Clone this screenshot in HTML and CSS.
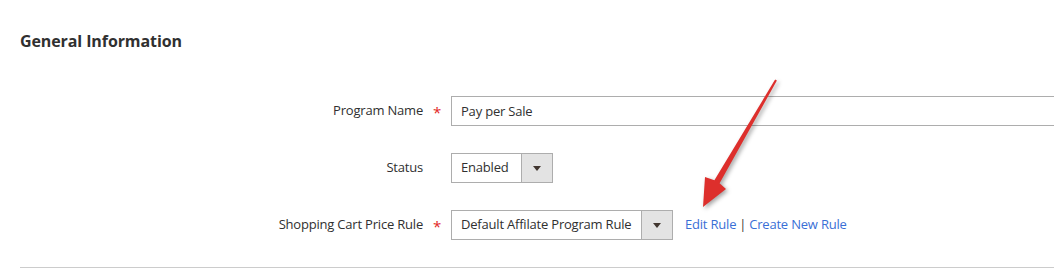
FILE: index.html
```html
<!DOCTYPE html>
<html>
<head>
<meta charset="utf-8">
<link rel="stylesheet" href="styles.css">
</head>
<body>
<div class="page">
  <h2 class="legend">General Information</h2>
  <div class="fields">
    <div class="field">
      <label class="label">Program Name</label>
      <span class="req">*</span>
      <div class="control"><input class="input wide" type="text" value="Pay per Sale"></div>
    </div>
    <div class="field">
      <label class="label">Status</label>
      <span class="req"></span>
      <div class="control">
        <div class="select status"><span class="select-text">Enabled</span><span class="select-btn"><span class="caret"></span></span></div>
      </div>
    </div>
    <div class="field">
      <label class="label">Shopping Cart Price Rule</label>
      <span class="req">*</span>
      <div class="control">
        <div class="select rule"><span class="select-text">Default Affilate Program Rule</span><span class="select-btn"><span class="caret"></span></span></div>
        <div class="links"><a href="#">Edit Rule</a><span class="sep">|</span><a href="#">Create New Rule</a></div>
      </div>
    </div>
  </div>
  <div class="divider"></div>
  <svg class="arrow" width="1054" height="269" viewBox="0 0 1054 269">
    <polygon points="776.9,80.5 719.6,183.3 726,189 703,207 705,177 714.4,180.3 775.1,79.5" fill="#dd2f2c"/>
  </svg>
</div>
</body>
</html>
```
FILE: styles.css
```css
html, body { margin: 0; padding: 0; background: #fff; overflow: hidden; }
body { font-family: "Open Sans", sans-serif; color: #303030; width: 1054px; height: 269px; }
.page { position: relative; padding: 30px 0 0 20px; height: 239px; }
.legend { margin: 0; font-size: 16px; font-weight: 700; line-height: 22px; color: #303030; letter-spacing: -0.1px; }
.fields { margin-top: 44px; display: flex; flex-direction: column; gap: 27px; }
.field { display: grid; grid-template-columns: 403px 28px 1fr; align-items: center; height: 30px; }
.label { text-align: right; font-size: 13px; letter-spacing: -0.2px; padding-bottom: 3px; }
.req { color: #e22626; font-size: 15px; padding-left: 10px; line-height: 1; padding-top: 2px; }
.control { display: flex; align-items: center; min-width: 0; }
.input { box-sizing: border-box; height: 30px; border: 1px solid #adadad; font-family: "Open Sans", sans-serif; font-size: 13px; letter-spacing: -0.2px; color: #303030; padding: 0 9px 1px; margin: 0; outline: none; }
.input.wide { width: 640px; flex: none; }
.select { box-sizing: border-box; height: 30px; border: 1px solid #adadad; display: flex; align-items: stretch; font-size: 13px; letter-spacing: -0.2px; }
.select-text { flex: 1; display: flex; align-items: center; padding-left: 9px; padding-bottom: 2px; }
.select-btn { width: 30px; background: #e3e3e3; border-left: 1px solid #adadad; display: flex; align-items: center; justify-content: center; }
.caret { width: 0; height: 0; border-left: 4px solid transparent; border-right: 4px solid transparent; border-top: 5px solid #41362f; margin-top: 1px; }
.select.status { width: 102px; }
.select.rule { width: 222px; }
.links { margin-left: 12px; font-size: 13px; letter-spacing: -0.2px; padding-bottom: 3px; }
.links a { color: #3a6fd6; text-decoration: none; }
.sep { color: #41362f; margin: 0 3px; }
.divider { margin-top: 27px; border-top: 1px solid #cccccc; margin-right: -20px; }
.arrow { position: absolute; left: 0; top: 0; filter: drop-shadow(2px 2px 2px rgba(0,0,0,0.35)); pointer-events: none; }
```
